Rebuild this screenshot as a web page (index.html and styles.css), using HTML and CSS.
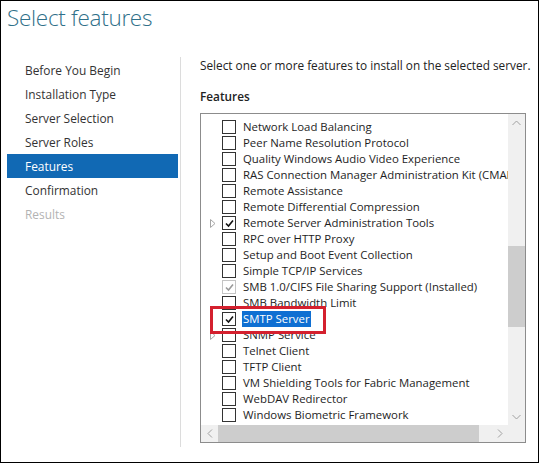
FILE: index.html
```html
<!DOCTYPE html>
<html lang="en">
<head>
    <meta charset="UTF-8">
    <title>Select features</title>
    <link rel="stylesheet" href="styles.css">
</head>
<body>

<div class="window">
    <h1 class="title">Select features</h1>

    <div class="wizard">
        <!-- Wizard steps -->
        <nav class="steps">
            <div class="step">Before You Begin</div>
            <div class="step">Installation Type</div>
            <div class="step">Server Selection</div>
            <div class="step">Server Roles</div>
            <div class="step active">Features</div>
            <div class="step">Confirmation</div>
            <div class="step disabled">Results</div>
        </nav>

        <div class="divider"></div>

        <!-- Page content -->
        <section class="content">
            <p class="intro">Select one or more features to install on the selected server.</p>
            <h2 class="label">Features</h2>

            <div class="listbox">
                <ul class="features">
                    <li class="feature"><span class="expander"></span><span class="check"></span><span class="name">Network Load Balancing</span></li>
                    <li class="feature"><span class="expander"></span><span class="check"></span><span class="name">Peer Name Resolution Protocol</span></li>
                    <li class="feature"><span class="expander"></span><span class="check"></span><span class="name">Quality Windows Audio Video Experience</span></li>
                    <li class="feature"><span class="expander"></span><span class="check"></span><span class="name">RAS Connection Manager Administration Kit (CMAK)</span></li>
                    <li class="feature"><span class="expander"></span><span class="check"></span><span class="name">Remote Assistance</span></li>
                    <li class="feature"><span class="expander"></span><span class="check"></span><span class="name">Remote Differential Compression</span></li>
                    <li class="feature"><span class="expander"><svg width="6" height="9" viewBox="0 0 6 9"><path d="M0.5 0.5 L5 4.5 L0.5 8.5 Z" fill="none" stroke="#a6a6a6"/></svg></span><span class="check checked"><svg width="11" height="11" viewBox="0 0 11 11"><path d="M2 5.5 L4.5 8 L9 2.5" fill="none" stroke="#111" stroke-width="1.6"/></svg></span><span class="name">Remote Server Administration Tools</span></li>
                    <li class="feature"><span class="expander"></span><span class="check"></span><span class="name">RPC over HTTP Proxy</span></li>
                    <li class="feature"><span class="expander"></span><span class="check"></span><span class="name">Setup and Boot Event Collection</span></li>
                    <li class="feature"><span class="expander"></span><span class="check"></span><span class="name">Simple TCP/IP Services</span></li>
                    <li class="feature"><span class="expander"></span><span class="check installed"><svg width="11" height="11" viewBox="0 0 11 11"><path d="M2 5.5 L4.5 8 L9 2.5" fill="none" stroke="#9a9a9a" stroke-width="1.6"/></svg></span><span class="name">SMB 1.0/CIFS File Sharing Support (Installed)</span></li>
                    <li class="feature"><span class="expander"></span><span class="check"></span><span class="name">SMB Bandwidth Limit</span></li>
                    <li class="feature"><span class="expander"></span><span class="check checked"><svg width="11" height="11" viewBox="0 0 11 11"><path d="M2 5.5 L4.5 8 L9 2.5" fill="none" stroke="#111" stroke-width="1.6"/></svg></span><span class="name selected">SMTP Server</span></li>
                    <li class="feature"><span class="expander"><svg width="6" height="9" viewBox="0 0 6 9"><path d="M0.5 0.5 L5 4.5 L0.5 8.5 Z" fill="none" stroke="#a6a6a6"/></svg></span><span class="check"></span><span class="name">SNMP Service</span></li>
                    <li class="feature"><span class="expander"></span><span class="check"></span><span class="name">Telnet Client</span></li>
                    <li class="feature"><span class="expander"></span><span class="check"></span><span class="name">TFTP Client</span></li>
                    <li class="feature"><span class="expander"></span><span class="check"></span><span class="name">VM Shielding Tools for Fabric Management</span></li>
                    <li class="feature"><span class="expander"></span><span class="check"></span><span class="name">WebDAV Redirector</span></li>
                    <li class="feature"><span class="expander"></span><span class="check"></span><span class="name">Windows Biometric Framework</span></li>
                </ul>

                <!-- vertical scrollbar -->
                <div class="vscroll">
                    <div class="arrow"><svg width="9" height="6" viewBox="0 0 9 6"><path d="M0.5 5 L4.5 1 L8.5 5" fill="none" stroke="#a0a0a0"/></svg></div>
                    <div class="track"><div class="thumb"></div></div>
                    <div class="arrow"><svg width="9" height="6" viewBox="0 0 9 6"><path d="M0.5 1 L4.5 5 L8.5 1" fill="none" stroke="#a0a0a0"/></svg></div>
                </div>

                <!-- horizontal scrollbar -->
                <div class="hscroll">
                    <div class="arrow"><svg width="6" height="9" viewBox="0 0 6 9"><path d="M5 0.5 L1 4.5 L5 8.5" fill="none" stroke="#a0a0a0"/></svg></div>
                    <div class="track"><div class="thumb"></div></div>
                    <div class="arrow"><svg width="6" height="9" viewBox="0 0 6 9"><path d="M1 0.5 L5 4.5 L1 8.5" fill="none" stroke="#a0a0a0"/></svg></div>
                </div>
                <div class="corner"></div>
            </div>
        </section>
    </div>

    <!-- annotation around the selected feature -->
    <div class="callout"></div>
</div>

</body>
</html>
```

FILE: styles.css
```css
body {
    margin: 0;
    font-family: "Open Sans", "Noto Sans", Arial, sans-serif;
    color: #1e1e1e;
}
.window {
    position: relative;
    width: 539px;
    height: 463px;
    box-sizing: border-box;
    border: 1px solid #000;
    background: #fff;
    overflow: hidden;
}
.title {
    margin: 0;
    padding: 3px 0 0 6px;
    height: 54px;
    box-sizing: border-box;
    font-size: 22.5px;
    font-weight: 300;
    line-height: 28px;
    color: #2f7089;
    letter-spacing: -0.3px;
}
.wizard {
    display: flex;
    height: 407px;
}
.steps {
    width: 171px;
    margin-left: 6px;
    padding-top: 3px;
}
.step {
    height: 24px;
    line-height: 24px;
    padding-left: 18px;
    font-size: 11.9px;
    color: #333;
}
.step.active {
    background: #1169b4;
    color: #fff;
}
.step.disabled {
    color: #b3b3b3;
}
.divider {
    width: 1px;
    margin: 2px 0 0 2px;
    height: 390px;
    background: #dcdcdc;
}
.content {
    flex: 1;
    padding: 2px 0 0 19px;
}
.intro {
    margin: 0;
    height: 16px;
    line-height: 16px;
    font-size: 11.8px;
    color: #222;
}
.label {
    margin: 15px 0 0;
    height: 16px;
    line-height: 16px;
    font-size: 11.8px;
    font-weight: 600;
    color: #222;
}
.listbox {
    margin-top: 9px;
    width: 326px;
    height: 330px;
    box-sizing: border-box;
    border: 1px solid #8c8c8c;
    display: grid;
    grid-template-columns: 307px 17px;
    grid-template-rows: 311px 17px;
}
.features {
    list-style: none;
    margin: 0;
    padding: 5px 0 0 6px;
    overflow: hidden;
}
.feature {
    display: flex;
    align-items: center;
    height: 16px;
    white-space: nowrap;
    font-size: 11.4px;
}
.expander {
    width: 10px;
    height: 16px;
    display: flex;
    align-items: center;
    padding-left: 3px;
    box-sizing: border-box;
    flex-shrink: 0;
}
.check {
    width: 14px;
    height: 14px;
    margin-left: 5px;
    box-sizing: border-box;
    border: 1px solid #333;
    background: #fff;
    display: flex;
    align-items: center;
    justify-content: center;
    flex-shrink: 0;
}
.check.installed {
    border-color: #c4c4c4;
}
.name {
    margin-left: 7px;
    line-height: 16px;
    flex-shrink: 0;
}
.name.selected {
    background: #0f6fd2;
    color: #fff;
    padding: 0 1px;
    margin-left: 6px;
}
.vscroll {
    background: #f0f0f0;
    display: flex;
    flex-direction: column;
}
.vscroll .arrow {
    height: 17px;
    display: flex;
    align-items: center;
    justify-content: center;
}
.vscroll .track {
    flex: 1;
}
.vscroll .thumb {
    margin-top: 115px;
    height: 81px;
    background: #cdcdcd;
}
.hscroll {
    background: #f0f0f0;
    display: flex;
}
.hscroll .arrow {
    width: 17px;
    display: flex;
    align-items: center;
    justify-content: center;
}
.hscroll .track {
    flex: 1;
}
.hscroll .thumb {
    width: 261px;
    height: 17px;
    background: #cdcdcd;
}
.corner {
    background: #f0f0f0;
}
.callout {
    position: absolute;
    left: 209px;
    top: 305px;
    width: 116px;
    height: 28px;
    box-sizing: border-box;
    border: 3px solid #d4202e;
}
```
